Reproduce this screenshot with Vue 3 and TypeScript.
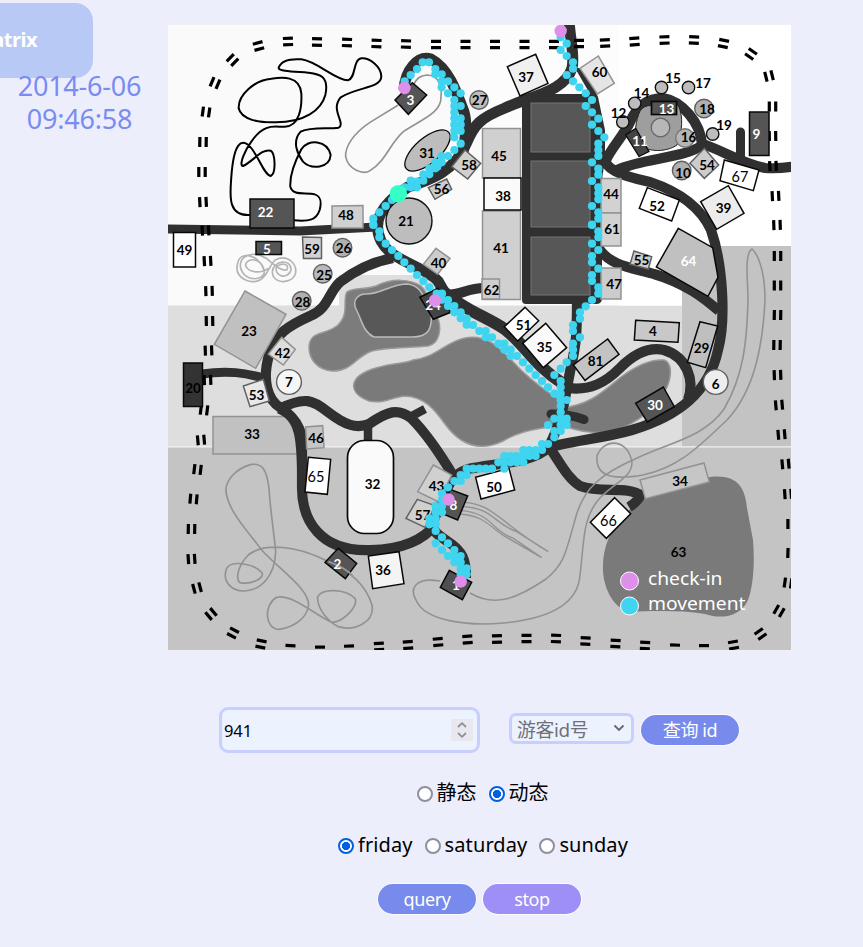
<script setup lang="ts">
import { ref } from 'vue'

type Pt = [number, number]
interface Shape { o?: Pt; pts: string; fill: string; stroke?: string; w?: number }
interface Disc { x: number; y: number; r: number; fill: string; stroke: string }
interface Label { n: number; x: number; y: number; c?: string; thin?: boolean }

const visitor = ref(941)
const mode = ref('dynamic')
const day = ref('friday')
const modes = [{ id: 'static', text: '静态' }, { id: 'dynamic', text: '动态' }]
const days = ['friday', 'saturday', 'sunday']

// railway sleepers: x, y, angle, single
const ties: number[][] = [
  [288, 41.5, -2], [317, 42, 1], [347, 42.5, 2], [376.5, 43.5, 2], [406, 44, 2], [436, 44.5, 0], [465.5, 44.5, 0],
  [495, 44.5, 0], [524.5, 44.5, 0], [554, 44.5, 0], [579, 43.5, 0], [605, 43, -3], [634.5, 41.5, -4], [664.5, 40, -2],
  [694, 40, 3], [723.5, 43.5, 12], [751, 54, 35], [769, 76, 76], [772.5, 106.5, 90], [772.5, 136, 89], [773, 166, 87],
  [775.5, 196, 87], [777, 225, 88], [777.5, 256, 90], [777.5, 285.5, 90], [777.5, 315, 91], [777, 345, 91], [777.5, 375, 88],
  [779, 405, 85], [781.5, 434.5, 85], [785.5, 464, 85], [788, 494, 86], [788, 524, 90, 1], [788, 553, 92, 1], [788, 583, 98],
  [779, 611, -60], [760.5, 634, -35], [733.5, 645, -10], [704, 645.5, 0, 1], [675, 645, 2, 1], [645, 645.5, 3], [615.5, 643.5, 3],
  [585.5, 641, 3], [556, 638.5, 2], [526.5, 638.5, 0], [497, 639, -1], [467.5, 639.5, -4], [438, 642, -5], [408, 645, -4],
  [379, 646.5, -3], [349, 646, -2, 1], [320, 647, 0, 1], [290.5, 645.5, 3, 1], [261, 644, 12], [233, 633, 28], [211, 614, 50],
  [197, 588, 75], [191.5, 559, 86], [191.5, 529, 91], [193.5, 499, 95], [197.5, 469.5, 97], [201, 440, 85], [204, 410, 97],
  [207.5, 380, 88], [208.5, 350.5, 88], [209.5, 321, 89], [209, 291, 88], [207.5, 261, 87], [205.5, 230.5, 87], [203, 202, 87],
  [202, 172, 90], [203, 142, 91], [206, 112, 98], [215, 83, -67], [232.5, 60, -45], [258.5, 46, -15],
]

interface Road { d: string; w?: number }
const roads: Road[] = [
  { d: 'M166 229L300 231L377 227', w: 9 },
  { d: 'M569 20C570 40 575 55 572 68C565 92 530 96 505 108C480 118 474 125 467 142C455 172 430 180 408 187C380 205 372 222 381 241C392 262 425 266 438 281L446 295', w: 11 },
  { d: 'M443 291C463 310 490 318 506 330C526 346 533 364 562 383', w: 12 },
  { d: 'M404 90C405 70 418 55 431 59C448 68 456 90 464 112Q468 125 463 152', w: 11 },
  { d: 'M445 294C458 297 466 288 484 288' },
  { d: 'M393 258C370 262 352 273 340 282C328 293 329 308 310 316C290 325 274 334 269 355C262 380 267 400 281 408C300 421 303 435 302 450L302 488C302 520 320 552 370 550C403 550 424 539 435 525' },
  { d: 'M279 409C305 396 313 400 328 412C345 425 356 429 369 424C388 411 398 408 411 418C426 433 438 450 454 477' },
  { d: 'M410 417L425 409M368 425L368 442', w: 8.5 },
  { d: 'M202 374C228 370 245 373 264 378', w: 9 },
  { d: 'M577 300C577 335 576 345 571 367C565 395 564 418 548 448C534 462 500 463 468 469C446 477 449 490 440 507C427 530 433 531 447 541C463 551 466 560 466 578' },
  { d: 'M549 447C560 462 567 478 580 486C602 494 627 485 642 496M642 492Q639 501 629 507' },
  { d: 'M604 157C605 168 617 175 650 182C680 192 701 208 711 230C723 265 726 320 718 350C709 392 679 416 632 430C600 439 570 441 547 448' },
  { d: 'M606 160C612 147 624 135 630 122C638 103 650 98 663 98C682 101 701 123 702 145C687 158 642 158 617 170' },
  { d: 'M700 143C725 151 740 163 765 168Q780 169 796 166' },
  { d: 'M598 247C610 267 635 268 654 274C685 283 704 298 719 311' },
  { d: 'M562 387C590 393 607 381 620 368C636 352 650 347 664 350C687 357 695 380 688 400' },
]

const G = '#bdbdbd', D = '#555', K = '#080808', L = '#929292', M = '#606060'
const shapes: Shape[] = [
  { pts: '250,199 294,199 294,228 250,228', fill: D },
  { pts: '332,206 363,205.500 363,228 332,228', fill: '#d0d0d0', stroke: L },
  { o: [370, 20], pts: '75,240 127,188 170,225 115,283', fill: D },
  { o: [370, 20], pts: '412,140 497,103 534,190 450,228', fill: '#f0f0f0' },
  { pts: '482.500,128.500 520.500,128.500 520.500,178 482.500,178', fill: '#d0d0d0', stroke: L },
  { pts: '482.500,211 520.500,211 520.500,299.500 482.500,299.500', fill: '#d0d0d0', stroke: L },
  { pts: '484,178 521,178 521,210 484,210', fill: '#fafafa' },
  { pts: '482,279 499.500,279 499.500,299 482,299', fill: '#cfcfcf', stroke: L },
  { o: [370, 20], pts: '285,390 332,430 293,477 245,440', fill: '#d0d0d0', stroke: M },
  { o: [370, 20], pts: '175,503 230,477 245,508 195,538', fill: '#ccc', stroke: M },
  { o: [580, 20], pts: '0,145 55,108 103,190 52,222', fill: '#e5e5e5', stroke: L },
  { pts: '749.500,112 769,112 769,155.500 749.500,155.500', fill: D },
  { o: [580, 20], pts: '373,385 416,435 373,475 330,430', fill: '#ccc', stroke: M },
  { o: [580, 20], pts: '433,420 537,450 520,512 420,482', fill: '#fff' },
  { o: [580, 20], pts: '202,503 298,540 275,603 178,565', fill: '#fff' },
  { o: [580, 20], pts: '362,545 445,497 492,580 410,628', fill: '#ececec' },
  { pts: '601,178.500 621,178.500 621,213 601,213', fill: '#d2d2d2', stroke: L },
  { pts: '601,213 621,213 621,246 601,246', fill: '#d2d2d2', stroke: L },
  { pts: '601,268 621,268 621,299 601,299', fill: '#ccc', stroke: L },
  { pts: '173.500,232.500 195.500,232.500 195.500,267 173.500,267', fill: '#fff' },
  { pts: '256,241.500 281.500,241.500 281.500,254.500 256,254.500', fill: D },
  { pts: '302.500,237 321.500,237.500 321.500,258.500 303.500,258.500', fill: '#d2d2d2', stroke: M },
  { o: [165, 225], pts: '240,198 363,268 272,430 148,358', fill: '#c0c0c0', stroke: L },
  { o: [165, 225], pts: '350,337 391,373 355,420 310,387', fill: '#ddd', stroke: L },
  { o: [165, 225], pts: '235,483 295,463 313,528 255,545', fill: '#e8e8e8', stroke: M },
  { pts: '183.500,363 202.500,363 202.500,406.500 183.500,406.500', fill: '#333' },
  { o: [165, 435], pts: '422,-24 473,-28 477,38 425,42', fill: '#c6c6c6', stroke: L },
  { o: [370, 225], pts: '198,70 240,100 203,148 160,118', fill: '#ccc', stroke: L },
  { o: [370, 225], pts: '150,217 203,190 242,262 190,283', fill: '#444', w: 1.6 },
  { o: [370, 225], pts: '465,247 506,287 443,348 403,305', fill: '#fff' },
  { o: [370, 225], pts: '527,295 590,368 520,428 458,355', fill: '#fafafa' },
  { o: [580, 225], pts: '162,78 215,95 205,132 150,118', fill: '#ccc', stroke: M },
  { o: [580, 225], pts: '295,10 398,68 414,157 384,214 229,126', fill: '#c0c0c0' },
  { o: [580, 225], pts: '167,286 298,293 294,352 163,345', fill: '#c8c8c8' },
  { o: [580, 225], pts: '360,290 413,303 377,428 322,412', fill: '#bfbfbf' },
  { o: [580, 225], pts: '83,342 117,388 15,466 -20,420', fill: '#c3c3c3' },
  { o: [580, 225], pts: '250,486 283,545 202,591 167,535', fill: D },
  { o: [165, 435], pts: '430,67 497,73 487,178 420,171', fill: '#fff' },
  { o: [165, 435], pts: '520,340 575,385 541,431 480,382', fill: D },
  { o: [370, 435], pts: '-5,363 87,350 102,446 8,461', fill: '#f4f4f4' },
  { o: [370, 435], pts: '190,90 245,120 205,200 143,170', fill: '#d0d0d0', stroke: L },
  { o: [370, 435], pts: '142,193 195,212 165,277 108,250', fill: '#d0d0d0', stroke: M },
  { o: [370, 435], pts: '317,127 417,100 434,165 333,192', fill: '#fff' },
  { o: [370, 435], pts: '240,163 293,183 263,255 215,235', fill: D },
  { o: [370, 435], pts: '238,406 305,442 277,494 211,457', fill: '#4f4f4f' },
  { o: [580, 435], pts: '180,135 372,84 388,141 196,191', fill: '#c6c6c6', stroke: L },
  { o: [580, 435], pts: '104,188 152,236 79,310 31,262', fill: '#fff' },
]

const discs: Disc[] = [
  { x: 479, y: 100, r: 9.2, fill: G, stroke: M }, { x: 409, y: 221, r: 23, fill: '#bdbdbd', stroke: '#111' },
  { x: 661.5, y: 87.5, r: 6.2, fill: G, stroke: '#111' }, { x: 688.5, y: 87.5, r: 6.2, fill: G, stroke: '#111' },
  { x: 634.7, y: 103.3, r: 6.2, fill: G, stroke: '#111' }, { x: 622.8, y: 122, r: 6.2, fill: G, stroke: '#111' },
  { x: 712.7, y: 134, r: 6.2, fill: G, stroke: '#111' }, { x: 704, y: 108.5, r: 9.3, fill: '#b0b0b0', stroke: M },
  { x: 685, y: 138, r: 9.3, fill: '#b5b5b5', stroke: '#777' }, { x: 681.7, y: 170.5, r: 9.3, fill: '#b0b0b0', stroke: M },
  { x: 342.5, y: 247.7, r: 9.3, fill: '#b0b0b0', stroke: M }, { x: 322.7, y: 273.7, r: 9.3, fill: '#b8b8b8', stroke: M },
  { x: 301.7, y: 300.8, r: 9.3, fill: '#b0b0b0', stroke: M }, { x: 289, y: 382, r: 12.4, fill: '#f6f6f6', stroke: M },
  { x: 715.7, y: 382, r: 12.4, fill: '#eee', stroke: M },
]

const W = '#fff'
const labels: Label[] = [
  { n: 22, x: 265.5, y: 212, c: W }, { n: 48, x: 346, y: 215 }, { n: 3, x: 410.5, y: 100, c: W }, { n: 31, x: 427, y: 153 },
  { n: 27, x: 479.5, y: 100.5 }, { n: 37, x: 526, y: 77 }, { n: 45, x: 499, y: 156 }, { n: 38, x: 503, y: 196 }, { n: 41, x: 501, y: 248 },
  { n: 62, x: 491.5, y: 290 }, { n: 58, x: 469, y: 165 }, { n: 56, x: 441.5, y: 189 }, { n: 21, x: 406, y: 221 }, { n: 60, x: 599.5, y: 72 },
  { n: 15, x: 673, y: 78.5 }, { n: 17, x: 703, y: 83 }, { n: 14, x: 641.5, y: 93 }, { n: 12, x: 618.5, y: 113.5 }, { n: 18, x: 707, y: 109.5 },
  { n: 19, x: 724, y: 125 }, { n: 16, x: 688.5, y: 137 }, { n: 10, x: 683, y: 173.5 }, { n: 13, x: 666.5, y: 109, c: W }, { n: 11, x: 640, y: 141.5, c: W },
  { n: 9, x: 756.5, y: 134, c: W }, { n: 54, x: 707, y: 165 }, { n: 67, x: 740, y: 177.5, thin: true }, { n: 52, x: 657, y: 206 }, { n: 39, x: 723.5, y: 208 },
  { n: 44, x: 611, y: 194.5 }, { n: 61, x: 612, y: 229 }, { n: 47, x: 614, y: 284.5 }, { n: 49, x: 184.5, y: 250 }, { n: 5, x: 267, y: 249, c: W },
  { n: 59, x: 312, y: 249 }, { n: 26, x: 343.5, y: 248.5 }, { n: 25, x: 324, y: 275.5 }, { n: 28, x: 302.5, y: 302 }, { n: 23, x: 249, y: 331 },
  { n: 42, x: 282.5, y: 353 }, { n: 7, x: 289, y: 382.5 }, { n: 53, x: 256.5, y: 395.5 }, { n: 20, x: 193, y: 388 }, { n: 33, x: 252, y: 434.5 },
  { n: 46, x: 316, y: 438.5 }, { n: 40, x: 438.5, y: 263 }, { n: 24, x: 433, y: 305, c: W }, { n: 51, x: 523.5, y: 325 }, { n: 35, x: 544.5, y: 347 },
  { n: 55, x: 641.5, y: 260.5 }, { n: 64, x: 688.5, y: 261, c: W }, { n: 4, x: 653, y: 331.5 }, { n: 29, x: 701.5, y: 348 }, { n: 81, x: 595.5, y: 361.5 },
  { n: 30, x: 655, y: 405, c: W }, { n: 6, x: 715.7, y: 384 }, { n: 65, x: 316, y: 477, thin: true }, { n: 32, x: 372.5, y: 484 }, { n: 2, x: 337.5, y: 564, c: W },
  { n: 36, x: 383, y: 570 }, { n: 43, x: 436.5, y: 486 }, { n: 57, x: 422.5, y: 515.5 }, { n: 50, x: 494, y: 487 }, { n: 8, x: 453.5, y: 505, c: W },
  { n: 1, x: 456, y: 585, c: W }, { n: 34, x: 680, y: 481.5 }, { n: 66, x: 608.5, y: 521, thin: true }, { n: 63, x: 678.5, y: 552.5 },
]

// track samples, grouped by map tile and stored at three units per pixel
const track: { o: Pt; d: string }[] = [
  { o: [370, 20], d: '158,127 177,127 141,147 122,165 104,184 196,147 196,163 215,163 215,184 234,184 215,202 234,220 253,202 272,220 253,240 272,258 253,258 253,277 253,295 272,295 253,314 272,314 253,333 272,333 253,352 272,371 253,390 234,408 215,408 215,427 196,427 202,440 178,445 178,463 196,445 160,463 160,482 141,485 122,482 141,502 122,502 104,502 66,540 47,558 28,577 10,596 10,614 572,52 590,71 572,90 590,108 609,127 609,146 590,165 609,184 628,202' },
  { o: [580, 20], d: '17,220 36,240 17,258 36,277 55,296 36,314 55,333 73,352 55,371 55,390 55,408 36,427 55,446 55,464 36,483 55,502 55,520 55,538 36,558 55,577 55,596 36,614' },
  { o: [580, 225], d: '36,0 55,19 55,37 36,56 55,75 36,93 36,112 55,131 36,150 36,168 55,187 55,206 36,225 17,244 0,262 0,281 0,337' },
  { o: [370, 225], d: '10,0 28,19 28,37 47,56 66,75 85,93 103,112 122,131 141,150 160,168 178,187 200,206 216,206 216,224 234,225 234,243 253,243 253,262 272,262 272,280 290,281 290,299 309,300 328,318 347,318 347,337 366,337 385,356 403,356 403,374 422,374 422,393 441,393 459,412 478,431 497,450 516,468 534,487 553,506 572,506 572,525 590,525 572,543 572,562 553,581 572,581 590,581 534,600 572,600 590,600 572,618 553,618 553,637 609,300 609,318 609,356 609,374 609,393 590,412 572,431 553,450 572,468 572,487' },
  { o: [370, 435], d: '516,27 534,27 516,45 497,45 478,45 460,45 497,63 478,63 460,63 440,63 422,63 403,63 460,82 440,73 440,82 422,82 403,82 385,82 403,101 366,101 347,101 328,101 309,101 290,101 290,120 272,120 272,138 253,138 234,157 216,175 216,194 216,213 197,213 216,232 197,232 197,250 178,250 178,268 197,268 197,288 216,307 197,325 234,325 216,345 253,345 234,363 253,363 272,363 253,382 272,382 272,400 290,400 272,418 290,418' },
]
const dots = track.flatMap(t => t.d.split(' ').map(p => {
  const [x, y] = p.split(',').map(Number)
  return { x: t.o[0] + x / 3, y: t.o[1] + y / 3 }
}))
const checkins: Pt[] = [[560.7, 31], [404.5, 88], [435, 300.5], [448.5, 499.5], [460.7, 581.5]]
const place = (s: Shape) => s.o ? `translate(${s.o[0]} ${s.o[1]}) scale(.33333)` : undefined
</script>

<template>
  <main class="page">
    <aside class="side">
      <div class="tab">matrix</div>
      <div class="clock"><div>2014-6-06</div><div>09:46:58</div></div>
    </aside>
    <section class="content">
      <svg class="map" viewBox="168 25 623 625" width="623" height="625">
        <rect x="168" y="25" width="623" height="625" fill="#fafafa" />
        <rect x="480" y="25" width="139" height="290" fill="#fcfcfc" />
        <rect x="619" y="25" width="172" height="290" fill="#fff" />
        <rect x="168" y="305.500" width="514" height="142" fill="#dedede" />
        <rect x="339" y="275" width="100" height="34" fill="#dedede" />
        <rect x="682" y="246" width="109" height="202" fill="#c3c3c3" />
        <rect x="619" y="246" width="63" height="59.500" fill="#fff" />
        <rect x="168" y="447" width="623" height="203" fill="#c4c4c4" />
        <path d="M168 446.800H791" stroke="#f2f2f2" stroke-width="1.200" />

        <g stroke="#999" stroke-width="1.500">
          <path fill="#7c7c7c" d="M347 292C355 287 365 290 376 286C392 278 410 279 421 286C431 296 430 308 436 314C444 330 438 344 428 346C410 348 385 347 372 351C355 357 352 371 333 371C316 370 309 358 309 347C310 330 325 336 338 325C350 313 342 300 347 292Z" />
          <path fill="#585858" stroke="#bbb" d="M366 294C382 294 390 284 408 284C425 287 423 302 431 310C433 330 428 337 412 337L374 337C363 332 362 320 356 309C352 300 358 294 366 294Z" />
          <path fill="#7a7a7a" d="M376 368C395 362 405 364 413 360C435 358 447 341 465 338C490 333 503 352 522 371C540 388 552 395 570 407L561 424C540 430 525 428 503 441C480 452 461 446 445 424C435 410 425 397 405 396C392 397 385 404 369 401C347 393 348 376 376 368Z" />
          <path fill="#7a7a7a" d="M562 408C590 405 604 391 621 377C637 365 651 359 664 360C673 363 671 378 667 387C658 408 635 424 618 429C602 435 580 433 560 424Z" />
          <path fill="#7a7a7a" stroke="none" d="M640 492L710 477C735 474 745 485 747 508L753 540C755 565 753 587 748 600C740 618 720 619 705 614C680 610 650 611 630 612C612 608 602 585 603 565C604 535 620 516 643 498Z" />
        </g>

        <path class="frame" d="M526 94H590L575 68L584 68L598 97L605 130V158L602 180V298Q602 304 596 304H526Q522 304 522 300V98Q522 94 526 94Z" />
        <g fill="none" stroke="#303030">
          <path v-for="(r, i) in roads" :key="i" :d="r.d" :stroke-width="r.w || 10.2" />
          <path d="M740.500 132V165M551 414Q570 414 584 419.500" stroke-linecap="round" stroke-width="9" />
        </g>
        <g fill="#575757" stroke="#747474" stroke-width="1">
          <rect x="531" y="103" width="59" height="49" />
          <rect x="531" y="161" width="59" height="66" />
          <rect x="531" y="237" width="59" height="58" />
        </g>
        <path d="M640 111C645 103 655 106 666 105H678C684 117 682 132 677 145C667 152 648 153 639 144C633 134 636 120 640 111Z" fill="#9e9e9e" stroke="#222" />
        <circle cx="660.500" cy="127.500" r="9.300" fill="#b7b7b7" stroke="#666" stroke-width="1.300" />
        <path d="M213 416.500H291Q302 420 302 454H213Z" fill="#c1c1c1" stroke="#929292" stroke-width="1.500" />
        <path d="M279 409C300 418 302 435 302 488" fill="none" stroke="#303030" stroke-width="9.500" />

        <g v-for="(t, i) in ties" :key="'t' + i" :transform="`translate(${t[0]} ${t[1]}) rotate(${t[2]})`">
          <rect v-if="t[3]" x="-5" y="-1.500" width="10" height="3.200" />
          <path v-else d="M-5 -3.200H5M-5 3.200H5" stroke="#000" stroke-width="3.200" />
        </g>

        <path transform="translate(168 20) scale(.33333)" fill="none" stroke="#000" stroke-width="6"
          d="M247 585C175 590 187 520 190 470C198 360 223 365 235 371C265 385 285 465 308 468C325 460 322 400 308 392C280 385 255 425 225 438C210 435 235 385 250 365C290 305 325 323 350 320C395 320 402 260 400 220C395 165 340 172 310 176C260 180 210 225 212 265C220 300 275 308 320 307C410 308 460 270 472 225C485 165 450 162 420 158C385 155 330 155 332 143C340 120 370 116 400 118C450 125 500 180 540 181C565 175 553 120 580 115C605 113 640 140 640 170C638 205 570 200 518 232C485 270 535 310 512 323C480 328 430 320 398 335C370 365 390 405 405 425C430 450 485 445 488 405C478 360 420 355 400 388C378 430 365 470 367 500C375 530 415 515 440 523C462 530 460 550 455 570C445 600 425 605 378 601" />
        <g fill="none" stroke="#929292" stroke-width="5">
          <path transform="translate(370 20) scale(.33333)" d="M85 255L0 307C-50 340 -75 380 -73 410C-65 450 -20 465 0 452C50 420 60 370 100 335C150 300 215 280 213 230C218 190 200 165 170 165C150 167 140 175 130 195" />
          <path transform="translate(165 225) scale(.33333)" stroke="#b4b4b4" d="M295 130C280 90 225 75 218 115C205 160 260 180 285 165C310 150 310 125 330 105C370 85 400 120 390 150C375 180 320 175 322 140C325 105 380 100 378 135C370 165 325 155 335 125C355 110 375 120 365 135C340 140 310 100 300 98C260 75 220 95 227 130C240 175 300 165 298 140C290 90 235 100 243 125C255 145 290 145 310 130" />
          <path transform="translate(165 435) scale(.33333)" d="M480 375C400 335 300 320 250 360C220 390 210 430 225 443C260 450 295 430 292 415C270 385 200 375 185 400C170 440 200 470 240 468C290 465 330 420 332 350C328 300 315 220 312 160C305 100 290 85 260 88C210 100 180 140 183 170C190 230 250 290 290 345C350 410 430 460 431 510C425 560 370 580 340 583C300 580 295 510 335 487C380 475 450 540 500 562C540 560 580 510 570 490C540 460 470 460 458 485C455 520 490 560 520 575C570 590 630 560 621 510C600 440 540 400 480 375" />
          <path transform="translate(370 435) scale(.33333)" stroke-width="4" d="M280 202C370 205 390 265 535 350M280 215C370 220 370 265 440 290L535 350M270 226C370 235 360 285 430 310L515 368M265 237C350 240 365 285 410 307L515 368" />
          <path stroke-width="1.600" d="M440 581C416 577 409 588 416 600C425 622 470 626 503 623C547 619 578 605 580 575C584 545 582 518 599 499C615 482 637 475 631 458C625 438 603 439 597 456C595 480 620 479 643 475C681 467 702 443 727 420C756 389 763 341 765 300C765 269 757 253 752 249C744 254 748 280 748 300C747 340 744 375 724 409C704 438 667 443 635 459C601 474 585 488 577 513C566 550 566 563 546 579C518 598 495 608 470 593" />
        </g>

        <polygon v-for="(s, i) in shapes" :key="'s' + i" :points="s.pts" :fill="s.fill" :stroke="s.stroke || K"
          :stroke-width="(s.w || 1.5) * (s.o ? 3 : 1)" :transform="place(s)" />
        <g stroke="#080808" stroke-width="1.700">
          <rect x="651.500" y="101.500" width="25" height="13" fill="#555" />
          <polygon points="625.700,135 635.700,128.500 649,151.500 639,156.500" fill="#444" stroke-width="1.300" />
          <rect x="347.500" y="440.500" width="46" height="93" rx="17" fill="#fafafa" />
          <ellipse cx="427.500" cy="150.500" rx="28" ry="12.500" transform="rotate(-41 427.500 150.500)" fill="#bdbdbd" stroke-width="1.300" />
        </g>
        <circle v-for="(d, i) in discs" :key="'d' + i" :cx="d.x" :cy="d.y" :r="d.r" :fill="d.fill" :stroke="d.stroke" stroke-width="1.400" />
        <path transform="translate(165 435) scale(.33333)" d="M490 380Q535 395 565 423" fill="none" stroke="#999" stroke-width="5" />
        <text v-for="l in labels" :key="l.n" class="num" :class="{ thin: l.thin }" :x="l.x" :y="l.y + 4.8" :fill="l.c || '#000'">{{ l.n }}</text>

        <circle v-for="(p, i) in dots" :key="'p' + i" :cx="p.x" :cy="p.y" r="4.100" fill="#3fd4ef" />
        <circle v-for="(p, i) in checkins" :key="'c' + i" :cx="p[0]" :cy="p[1]" r="6.200" fill="#dd8fea" />
        <circle cx="398.300" cy="193.700" r="8.800" fill="#35ffc6" />

        <g stroke="#fff" stroke-width="1">
          <circle cx="629.500" cy="581" r="9" fill="#dd8fea" />
          <circle cx="629.500" cy="606" r="9" fill="#3fd4ef" />
        </g>
        <text class="key" x="648" y="585" textLength="74.500" lengthAdjust="spacingAndGlyphs">check-in</text>
        <text class="key" x="648" y="610" textLength="97.500" lengthAdjust="spacingAndGlyphs">movement</text>
      </svg>

      <div class="controls">
        <div class="row search">
          <label class="number">
            <input v-model="visitor" type="text">
            <span class="spin">
              <svg width="12" height="18" viewBox="0 0 12 18" fill="none" stroke="#8f8f9a" stroke-width="1.800"><path d="M2 6L6 2.200L10 6M2 12L6 15.800L10 12" /></svg>
            </span>
          </label>
          <div class="select">
            <span>游客id号</span>
            <svg width="12" height="8" viewBox="0 0 12 8" fill="none" stroke="#66666c" stroke-width="1.800"><path d="M1.500 1.500L6 6L10.500 1.500" /></svg>
          </div>
          <button class="find">查询 id</button>
        </div>
        <div class="row modes">
          <label v-for="m in modes" :key="m.id"><input v-model="mode" type="radio" :value="m.id"><span>{{ m.text }}</span></label>
        </div>
        <div class="row days">
          <label v-for="d in days" :key="d"><input v-model="day" type="radio" :value="d"><span>{{ d }}</span></label>
        </div>
        <div class="row actions">
          <button>query</button>
          <button class="stop">stop</button>
        </div>
      </div>
    </section>
  </main>
</template>

<style>
body { background: #eceefc; }
</style>

<style scoped>
.page {
  display: flex;
  width: 863px;
  height: 947px;
  overflow: hidden;
  background: #eceefc;
  font-family: "Noto Sans", "Noto Sans CJK SC", sans-serif;
}
.side { width: 168px; flex: none; padding-top: 3px; box-sizing: border-box; }
.tab {
  box-sizing: border-box;
  width: 93px;
  height: 75px;
  padding: 0 56px 2px 0;
  display: flex;
  align-items: center;
  justify-content: flex-end;
  border-radius: 0 18px 18px 0;
  background: #b8c9f5;
  color: #fff;
  font-size: 20px;
  font-weight: 700;
  letter-spacing: -.5px;
}
.clock {
  width: 159px;
  margin-top: -9px;
  color: #7a8cf0;
  font-size: 27px;
  line-height: 33px;
  letter-spacing: -.2px;
  text-align: center;
}
.content { width: 623px; flex: none; padding-top: 25px; }
.map { display: block; box-shadow: 0 0 0 1px #f0f0f3; }
.frame { fill: #303030; }
.num { font: 700 13.5px Lato, sans-serif; text-anchor: middle; }
.thin { font-weight: 400; font-size: 14.500px; }
.key { fill: #fff; font-size: 18px; }
.controls { padding-top: 57px; }
.row { display: flex; align-items: center; }
.search { padding-left: 51px; height: 46px; }
.number {
  box-sizing: border-box;
  display: flex;
  align-items: center;
  width: 261px;
  height: 46px;
  padding: 0 2px;
  border: 3px solid #c8cfff;
  border-radius: 9px;
  background: #edf2ff;
}
.number input {
  flex: 1;
  min-width: 0;
  padding: 0;
  border: 0;
  outline: 0;
  background: none;
  font: 16.500px "Noto Sans", sans-serif;
  letter-spacing: -.1px;
}
.spin { display: flex; align-items: center; justify-content: center; width: 22px; height: 22px; margin-right: 2px; background: #e8e8ee; }
.select {
  box-sizing: border-box;
  display: flex;
  align-items: center;
  justify-content: space-between;
  width: 125px;
  height: 31px;
  margin: -4px 7px 0 29px;
  padding: 0 6px 0 5px;
  border: 3px solid #c8cfff;
  border-radius: 7px;
  background: #edf2ff;
  color: #707078;
  font-size: 18.800px;
  letter-spacing: -.3px;
}
.select span { padding-top: 1px; }
button {
  width: 98px;
  height: 30px;
  padding: 0;
  border: 0;
  border-radius: 15px;
  box-shadow: 0 0 0 1px #fafaff;
  background: #788bec;
  color: #fff;
  font: 18px/30px "Noto Sans", "Noto Sans CJK SC", sans-serif;
  letter-spacing: -.4px;
}
.stop { background: #9d8ff5; }
.modes { justify-content: center; gap: 12px; margin: 26px 0 0 6px; height: 28px; }
.days { justify-content: center; gap: 12px; margin: 24px 0 0 7px; height: 28px; }
.row label:not(.number) { display: flex; align-items: center; gap: 4px; font-size: 20px; line-height: 28px; }
.days label span { letter-spacing: .1px; }
input[type="radio"] {
  appearance: none;
  box-sizing: border-box;
  width: 16px;
  height: 16px;
  margin: 2px 0 0;
  border: 2px solid #8f8f9d;
  border-radius: 50%;
  background: #fff;
}
input[type="radio"]:checked { border-color: #0060df; background: radial-gradient(circle, #0060df 3.800px, #fff 4.400px); }
.actions { justify-content: center; gap: 7px; margin: 25px 0 0; }
</style>
